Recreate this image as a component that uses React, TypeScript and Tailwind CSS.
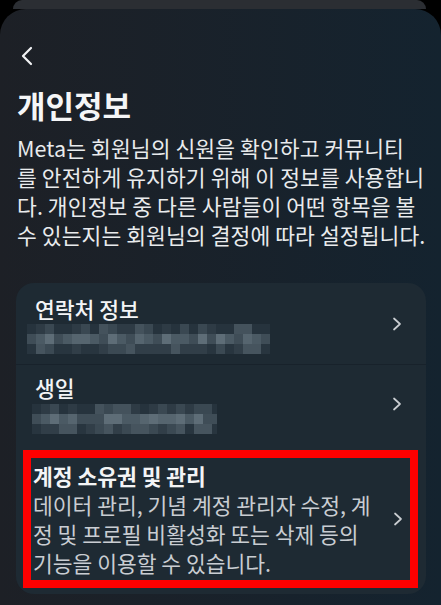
import React from 'react';

// pixelated (censored) value under a row title
const Mosaic: React.FC<{ width: number; seed: number }> = ({ width, seed }) => {
  const cell = 9;
  const cols = Math.ceil(width / cell);
  const rows = [
    ['#26333d', '#2e3b45', '#3a4852', '#44525c'],
    ['#3f4d57', '#4b5a64', '#56656f', '#5e6d77'],
    ['#28353f', '#313e48', '#3b4953', '#46545e'],
  ];
  let s = seed;
  const rnd = () => {
    s = (s * 9301 + 49297) % 233280;
    return s / 233280;
  };
  const rects: React.ReactNode[] = [];
  rows.forEach((palette, r) => {
    for (let c = 0; c < cols; c++) {
      const edge = c === 0 || c === cols - 1;
      const fill = edge ? palette[0] : palette[Math.floor(rnd() * palette.length)];
      rects.push(<rect key={`${r}-${c}`} x={c * cell} y={r * 10} width={cell} height={10} fill={fill} />);
    }
  });
  return (
    <svg width={width} height={30} viewBox={`0 0 ${width} 30`} className="block">
      {rects}
    </svg>
  );
};

const Chevron = () => (
  <svg width="10" height="14" viewBox="0 0 10 14" className="shrink-0">
    <polyline points="2,1.5 8,7 2,12.5" fill="none" stroke="#c9cdd1" strokeWidth="1.7" strokeLinecap="round" strokeLinejoin="round" />
  </svg>
);

const App: React.FC = () => {
  return (
    <div className="w-[441px] h-[605px] overflow-hidden bg-black font-['Noto_Sans_CJK_KR','Noto_Sans',sans-serif]">
      {/* previous screen peeking behind the sheet */}
      <div className="h-[9px] ml-[13px] mr-[15px] rounded-t-[10px] bg-[#2b2e33]" />

      {/* Sheet */}
      <div className="h-[596px] rounded-t-[26px] bg-linear-to-r from-[#1d2026] to-[#14232f] pl-[16px] pr-[15px] pt-[37px]">
        <div className="pl-[4px] h-[20px] flex items-center">
          <svg width="14" height="20" viewBox="0 0 14 20">
            <polyline points="11,2 3,10 11,18" fill="none" stroke="#f2f3f5" strokeWidth="2.2" strokeLinecap="round" strokeLinejoin="round" />
          </svg>
        </div>

        <h1 className="mt-[21px] pl-[1px] text-[31px] leading-[36px] font-bold text-[#f5f6f7]">
          개인정보
        </h1>

        <p className="mt-[10px] pl-[1px] text-[21.5px] leading-[29px] tracking-[0.1px] text-[#e9ebed] whitespace-nowrap">
          <span className="block">Meta는 회원님의 신원을 확인하고 커뮤니티</span>
          <span className="block">를 안전하게 유지하기 위해 이 정보를 사용합니</span>
          <span className="block">다. 개인정보 중 다른 사람들이 어떤 항목을 볼</span>
          <span className="block">수 있는지는 회원님의 결정에 따라 설정됩니다.</span>
        </p>

        {/* Card */}
        <div className="mt-[34px] rounded-[18px] bg-[#1e2a33] overflow-hidden">
          <div className="h-[82px] flex items-center justify-between pl-[11px] pr-[24px] border-b border-[#18222b]">
            <div className="flex flex-col pt-[1px]">
              <span className="pl-[8px] text-[21.5px] leading-[28px] font-medium text-[#f3f4f6]">연락처 정보</span>
              <div className="mt-[1px]">
                <Mosaic width={243} seed={7} />
              </div>
            </div>
            <Chevron />
          </div>

          <div className="h-[78px] flex items-center justify-between pl-[16px] pr-[24px]">
            <div className="flex flex-col">
              <span className="pl-[3px] text-[21.5px] leading-[28px] font-medium text-[#f3f4f6]">생일</span>
              <div className="mt-[2px]">
                <Mosaic width={185} seed={31} />
              </div>
            </div>
            <Chevron />
          </div>

          <div className="mt-[7px] mb-[6px] ml-[7px] mr-[8px] border-[8px] border-[#ff0000] flex items-center justify-between pl-[2px] pr-[7px] py-[3px]">
            <div className="flex flex-col whitespace-nowrap">
              <span className="text-[21.5px] leading-[29px] font-bold text-[#f3f4f6]">계정 소유권 및 관리</span>
              <span className="text-[21.5px] leading-[29px] text-[#c9cdd2]">데이터 관리, 기념 계정 관리자 수정, 계</span>
              <span className="text-[21.5px] leading-[29px] text-[#c9cdd2]">정 및 프로필 비활성화 또는 삭제 등의</span>
              <span className="text-[21.5px] leading-[29px] text-[#c9cdd2]">기능을 이용할 수 있습니다.</span>
            </div>
            <Chevron />
          </div>
        </div>
      </div>
    </div>
  );
};

export default App;
